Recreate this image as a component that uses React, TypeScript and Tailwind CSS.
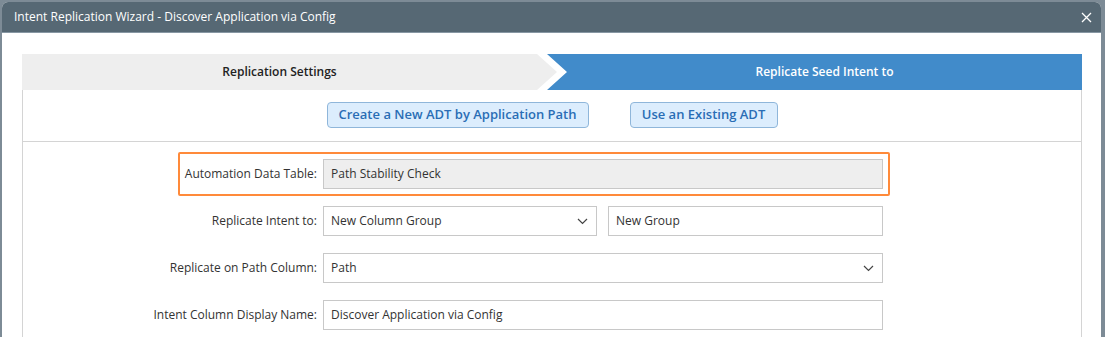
import React from 'react';

const Chevron: React.FC = () => (
    <svg width="11" height="7" viewBox="0 0 11 7" className="shrink-0">
        <polyline points="1,1 5.5,5.5 10,1" fill="none" stroke="#444" strokeWidth="1.2" />
    </svg>
);

const App: React.FC = () => {
    const font = { fontFamily: '"Open Sans", "Noto Sans", sans-serif' };

    return (
        <div className="w-[1105px] h-[337px] overflow-hidden bg-[#7d8b96] pt-[2px] pl-[2px]" style={font}>
            <div className="w-[1099px] h-[340px] bg-white rounded-t-[6px] overflow-hidden">
                {/* title bar */}
                <div className="h-[31px] bg-[#566874] border-b border-[#8797a3] flex items-center justify-between pl-[12px] pr-[9px]">
                    <span className="text-white text-[12px]">Intent Replication Wizard - Discover Application via Config</span>
                    <svg width="11" height="11" viewBox="0 0 11 11">
                        <path d="M1 1 L10 10 M10 1 L1 10" stroke="#fff" strokeWidth="1.3" />
                    </svg>
                </div>

                <div className="pt-[21px] pl-[20px]">
                    {/* wizard steps */}
                    <div className="flex h-[36px] w-[1060px]">
                        <div
                            className="w-[535px] shrink-0 bg-[#eeeeee] flex items-center justify-center pr-[20px] text-[12px] font-semibold text-[#222]"
                            style={{ clipPath: 'polygon(0 0, 515px 0, 535px 50%, 515px 100%, 0 100%)' }}
                        >
                            Replication Settings
                        </div>
                        <div
                            className="-ml-[10px] flex-1 bg-[#418bca] flex items-center justify-center pl-[20px] text-[12px] font-semibold text-white"
                            style={{ clipPath: 'polygon(0 0, 100% 0, 100% 100%, 0 100%, 20px 50%)' }}
                        >
                            Replicate Seed Intent to
                        </div>
                    </div>

                    {/* content box */}
                    <div className="w-[1060px] h-[260px] border-x border-[#d4d4d4]">
                        <div className="flex justify-center gap-[41px] pt-[12px] pb-[13px] border-b border-[#d4d4d4]">
                            <button className="h-[26px] w-[262px] rounded-[4px] border border-[#8fb6da] bg-[#dcedfd] text-[13px] font-semibold text-[#2a6db5]">
                                Create a New ADT by Application Path
                            </button>
                            <button className="h-[26px] w-[148px] rounded-[4px] border border-[#8fb6da] bg-[#dcedfd] text-[13px] font-semibold text-[#2a6db5]">
                                Use an Existing ADT
                            </button>
                        </div>

                        <div className="flex flex-col gap-[17px] pt-[17px] text-[12px] text-[#333]">
                            <div className="relative flex items-center h-[30px]">
                                <span className="absolute left-[155px] top-[-7px] w-[712px] h-[44px] border-[2.5px] border-[#ff8a3a] rounded-[2px]" />
                                <label className="w-[294px] text-right">Automation Data Table:</label>
                                <div className="ml-[6px] w-[560px] h-[30px] border border-[#c8c8c8] bg-[#eeeeee] flex items-center px-[7px]">
                                    Path Stability Check
                                </div>
                            </div>

                            <div className="flex items-center h-[30px]">
                                <label className="w-[294px] text-right">Replicate Intent to:</label>
                                <div className="ml-[6px] w-[274px] h-[30px] border border-[#c8c8c8] flex items-center justify-between pl-[7px] pr-[8px]">
                                    New Column Group
                                    <Chevron />
                                </div>
                                <div className="ml-[11px] w-[275px] h-[30px] border border-[#c8c8c8] flex items-center px-[7px]">
                                    New Group
                                </div>
                            </div>

                            <div className="flex items-center h-[30px]">
                                <label className="w-[294px] text-right">Replicate on Path Column:</label>
                                <div className="ml-[6px] w-[560px] h-[30px] border border-[#c8c8c8] flex items-center justify-between pl-[7px] pr-[8px]">
                                    Path
                                    <Chevron />
                                </div>
                            </div>

                            <div className="flex items-center h-[30px]">
                                <label className="w-[294px] text-right">Intent Column Display Name:</label>
                                <div className="ml-[6px] w-[560px] h-[30px] border border-[#c8c8c8] flex items-center px-[7px]">
                                    Discover Application via Config
                                </div>
                            </div>
                        </div>
                    </div>
                </div>
            </div>
        </div>
    );
};

export default App;
